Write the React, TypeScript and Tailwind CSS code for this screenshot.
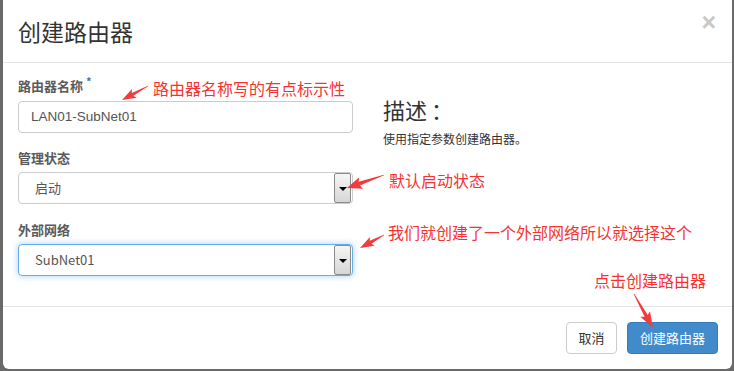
import React from 'react';

const cjk = "font-['Microsoft_YaHei','Noto_Sans_CJK_SC',sans-serif]";

type Pt = [number, number];

// tapered red arrow, thin at the tail and a wide head at the tip
function arrowPoints(tail: Pt, tip: Pt, head = 12, headW = 5, shaftW = 1.8) {
  const dx = tip[0] - tail[0];
  const dy = tip[1] - tail[1];
  const len = Math.hypot(dx, dy);
  const ux = dx / len;
  const uy = dy / len;
  const nx = -uy;
  const ny = ux;
  const bx = tip[0] - ux * head;
  const by = tip[1] - uy * head;
  const pts: Pt[] = [
    [tail[0] + nx * 0.3, tail[1] + ny * 0.3],
    [bx + nx * shaftW, by + ny * shaftW],
    [bx + nx * headW - ux * 2, by + ny * headW - uy * 2],
    tip,
    [bx - nx * headW - ux * 2, by - ny * headW - uy * 2],
    [bx - nx * shaftW, by - ny * shaftW],
    [tail[0] - nx * 0.3, tail[1] - ny * 0.3],
  ];
  return pts.map((p) => p.join(',')).join(' ');
}

const SelectBox = ({ value, focused }: { value: string; focused?: boolean }) => (
  <div
    className={
      'flex h-[32px] w-[335px] items-center rounded-[4px] border bg-white pl-[16px] pr-[1px] ' +
      (focused ? 'border-[#66afe9] shadow-[0_0_6px_rgba(102,175,233,0.6)]' : 'border-[#cccccc]')
    }
  >
    <span className="flex-1 text-[13px] text-[#555] font-['Noto_Sans_CJK_SC','Liberation_Sans',sans-serif]">{value}</span>
    <div className="flex h-[30px] w-[17px] items-end justify-center rounded-[2px] border border-[#8a8a8a] bg-gradient-to-b from-[#f6f6f6] to-[#d6d6d6] pb-[11px]">
      <div className="h-0 w-0 border-l-[4px] border-r-[4px] border-t-[4px] border-l-transparent border-r-transparent border-t-black" />
    </div>
  </div>
);

const Label = ({ children, required }: { children: React.ReactNode; required?: boolean }) => (
  <div className={`h-[20px] text-[13px] font-bold leading-[20px] text-[#5a5a5a] ${cjk}`}>
    {children}
    {required && <sup className="ml-[3px] text-[11px] text-[#3f73a8]">*</sup>}
  </div>
);

const App = () => {
  return (
    <div className="relative h-[371px] w-[734px] overflow-hidden bg-[#6a6a6a]">
      <div className="ml-[3px] flex h-[369px] w-[729px] flex-col rounded-b-[6px] bg-white">
        {/* Header */}
        <div className="flex h-[63px] items-start justify-between border-b border-[#e5e5e5] px-[15px]">
          <h4 className={`mt-[18px] text-[23px] leading-[26px] text-[#333] ${cjk}`}>创建路由器</h4>
          <span className="mr-[1px] mt-[10px] text-[25px] font-bold leading-[24px] text-[#c8c8c8] font-['Liberation_Sans',sans-serif]">×</span>
        </div>

        {/* Body */}
        <div className="flex h-[243px] gap-[30px] px-[15px] pt-[13px]">
          <div className="flex w-[335px] flex-col">
            <Label required>路由器名称</Label>
            <div className="mt-[5px] flex h-[32px] items-center rounded-[4px] border border-[#cccccc] pl-[12px] text-[13.5px] text-[#555] font-['Liberation_Sans',sans-serif]">
              LAN01-SubNet01
            </div>
            <div className="mt-[15px]">
              <Label>管理状态</Label>
            </div>
            <div className="mt-[4px]">
              <SelectBox value="启动" />
            </div>
            <div className="mt-[16px]">
              <Label>外部网络</Label>
            </div>
            <div className="mt-[4px]">
              <SelectBox value="SubNet01" focused />
            </div>
          </div>
          <div className={`flex flex-col pt-[20px] text-[#333] ${cjk}`}>
            <div className="text-[22px] leading-[26px]">
              描述<span className="ml-[4px]">：</span>
            </div>
            <div className="mt-[8px] text-[12px] leading-[18px]">使用指定参数创建路由器。</div>
          </div>
        </div>

        {/* Footer */}
        <div className={`flex flex-1 items-start justify-end gap-[10px] border-t border-[#e5e5e5] pr-[14px] pt-[15px] text-[13px] ${cjk}`}>
          <button className="h-[32px] w-[51px] rounded-[4px] border border-[#cccccc] bg-white text-[#333]">取消</button>
          <button className="h-[32px] w-[91px] rounded-[4px] border border-[#357ebd] bg-[#428bca] text-white">创建路由器</button>
        </div>
      </div>

      {/* Annotations */}
      <div className={`absolute left-[153px] top-[79px] text-[16px] leading-[18px] text-[#f53333] ${cjk}`}>路由器名称写的有点标示性</div>
      <div className={`absolute left-[389px] top-[171px] text-[16px] leading-[18px] text-[#f53333] ${cjk}`}>默认启动状态</div>
      <div className={`absolute left-[388px] top-[223px] text-[16px] leading-[18px] text-[#f53333] ${cjk}`}>我们就创建了一个外部网络所以就选择这个</div>
      <div className={`absolute left-[594px] top-[271px] text-[16px] leading-[18px] text-[#f53333] ${cjk}`}>点击创建路由器</div>

      <svg className="pointer-events-none absolute left-0 top-0" width="734" height="371">
        <g fill="#f23b3b">
          <polygon points={arrowPoints([148, 86], [122, 100], 12, 5, 1.6)} />
          <polygon points={arrowPoints([384, 175], [347, 188], 13, 6, 2)} />
          <polygon points={arrowPoints([384, 235], [360, 248], 12, 5, 1.8)} />
          <polygon points={arrowPoints([634, 294], [653, 328], 14, 5.5, 1.8)} />
        </g>
      </svg>
    </div>
  );
};

export default App;
